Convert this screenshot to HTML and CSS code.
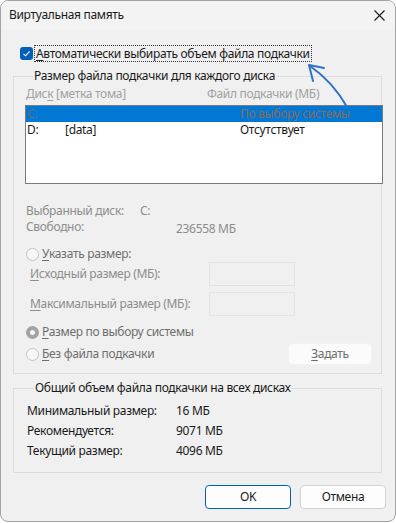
FILE: index.html
```html
<!DOCTYPE html>
<html lang="ru">
<head>
<meta charset="UTF-8">
<title>Виртуальная память</title>
<link rel="stylesheet" href="styles.css">
</head>
<body>

<div class="window">
    <div class="titlebar">
        <span class="title">Виртуальная память</span>
        <svg class="close" width="11" height="11" viewBox="0 0 11 11"><path d="M0.5 0.5 L10.5 10.5 M10.5 0.5 L0.5 10.5" stroke="#1a1a1a" stroke-width="1.1" fill="none"/></svg>
    </div>

    <div class="content">
        <div class="check-row">
            <span class="checkbox"><svg width="13" height="13" viewBox="0 0 13 13"><path d="M3.5 6.8 L5.6 8.8 L9.6 4.4" stroke="#fff" stroke-width="1.1" fill="none"/></svg></span>
            <span class="focus"><u>А</u>втоматически выбирать объем файла подкачки</span>
        </div>

        <fieldset class="group group-disk">
            <legend>Размер файла подкачки для каждого диска</legend>
            <div class="list-head">
                <span class="head-disk">Дис<u>к</u> [метка тома]</span>
                <span>Файл подкачки (МБ)</span>
            </div>
            <div class="list">
                <div class="list-row selected">
                    <span class="c-letter">C:</span><span class="c-label"></span><span class="c-size">По выбору системы</span>
                </div>
                <div class="list-row">
                    <span class="c-letter">D:</span><span class="c-label">[data]</span><span class="c-size">Отсутствует</span>
                </div>
            </div>

            <div class="info-row first">
                <span class="key-drive">Выбранный диск:</span><span>C:</span>
            </div>
            <div class="info-row">
                <span class="key-free">Свободно:</span><span class="free">236558 МБ</span>
            </div>

            <div class="radio-row custom">
                <span class="radio"></span><span><u>У</u>казать размер:</span>
            </div>
            <div class="field-row">
                <span class="field-label"><u>И</u>сходный размер (МБ):</span><span class="field"></span>
            </div>
            <div class="field-row second">
                <span class="field-label"><u>М</u>аксимальный размер (МБ):</span><span class="field"></span>
            </div>
            <div class="radio-row system">
                <span class="radio checked"></span><span><u>Р</u>азмер по выбору системы</span>
            </div>
            <div class="radio-row last">
                <span class="radio"></span><span><u>Б</u>ез файла подкачки</span>
                <span class="btn btn-set"><u>З</u>адать</span>
            </div>
        </fieldset>

        <fieldset class="group group-total">
            <legend>Общий объем файла подкачки на всех дисках</legend>
            <div class="total-row"><span class="total-key">Минимальный размер:</span><span>16 МБ</span></div>
            <div class="total-row"><span class="total-key">Рекомендуется:</span><span>9071 МБ</span></div>
            <div class="total-row"><span class="total-key">Текущий размер:</span><span>4096 МБ</span></div>
        </fieldset>

        <div class="buttons">
            <span class="btn btn-ok">OK</span>
            <span class="btn">Отмена</span>
        </div>
    </div>

    <svg class="arrow" width="396" height="523" viewBox="0 0 396 523">
        <path d="M347 107 Q333 82 310 66" stroke="#2f72c8" stroke-width="2" fill="none" stroke-linecap="round"/>
        <path d="M324 68 L309 65 L313 81" stroke="#2f72c8" stroke-width="2" fill="none" stroke-linecap="round" stroke-linejoin="round"/>
    </svg>
</div>

</body>
</html>
```

FILE: styles.css
```css
html {
    background-color: #fff;
}
body {
    margin: 0;
    font-family: "Noto Sans", "Liberation Sans", sans-serif;
    font-size: 12px;
    line-height: 16px;
    letter-spacing: -0.32px;
    color: #1a1a1a;
}
u {
    text-decoration-thickness: 1px;
    text-underline-offset: 2px;
}
.window {
    position: relative;
    width: 396px;
    height: 522px;
    box-sizing: border-box;
    border: 1px solid #a3a3a3;
    border-radius: 8px;
    background-color: #f0f0f0;
    overflow: hidden;
}
.titlebar {
    height: 29px;
    padding: 6px 0 0 8px;
    box-sizing: border-box;
    background-color: #f3f3f3;
    display: flex;
    justify-content: space-between;
}
.close {
    margin: 3px 10px 0 0;
}
.content {
    padding: 0 13px 0 12px;
}

/* checkbox */
.check-row {
    display: flex;
    align-items: center;
    margin-top: 15px;
    padding-left: 7px;
}
.checkbox {
    width: 13px;
    height: 13px;
    border-radius: 3px;
    background-color: #005fb8;
    display: flex;
}
.focus {
    margin-left: 1px;
    padding: 0 1px;
    line-height: 15px;
    border: 1px dotted #333;
}

/* groups */
.group {
    margin: 0;
    padding: 0;
    border: 1px solid #dcdcdc;
    min-width: 0;
}
.group legend {
    margin-left: 7px;
    padding: 0 1px;
    line-height: 16px;
}
.group-disk {
    margin-top: 6px;
    padding: 0 0 8px 12px;
}
.group-total {
    margin-top: 6px;
    padding: 5px 0 11px 13px;
}

.list-head {
    display: flex;
    margin-top: 2px;
    color: #a0a0a0;
}
.head-disk {
    width: 181px;
}
.list {
    height: 79px;
    margin: 3px -2px 0 -1px;
    border: 1px solid #7a7a80;
    background-color: #fff;
    box-sizing: border-box;
}
.list-row {
    display: flex;
    padding-left: 1px;
    height: 16px;
}
.list-row.selected {
    background-color: #0078d4;
    color: #6a6a70;
}
.list-row.selected .c-size {
    color: #8c6a58;
}
.c-letter {
    width: 38px;
}
.c-label {
    width: 175px;
}

.info-row {
    display: flex;
    color: #8c8c8c;
}
.info-row.first {
    margin-top: 19px;
}
.key-drive {
    width: 114px;
}
.key-free {
    width: 150px;
}
.free {
    margin-top: 2px;
}

.radio-row {
    display: flex;
    align-items: center;
    gap: 3px;
    color: #6e6e6e;
}
.radio-row.custom {
    margin-top: 9px;
}
.radio-row.system {
    margin-top: 8px;
}
.radio-row.last {
    margin-top: 3px;
    padding-right: 9px;
}
.radio {
    width: 13px;
    height: 13px;
    box-sizing: border-box;
    border: 1px solid #c2c2c2;
    border-radius: 50%;
    background-color: #f7f7f7;
}
.radio.checked {
    border: 4px solid #a3a3a3;
    background-color: #f7f7f7;
}

.field-row {
    display: flex;
    align-items: center;
    padding-left: 4px;
    color: #8c8c8c;
}
.field-row.second {
    margin-top: 6px;
}
.field-label {
    width: 179px;
}
.field {
    width: 86px;
    height: 24px;
    box-sizing: border-box;
    border: 1px solid #e3e3e3;
    background-color: #f0f0f0;
}

.btn {
    width: 86px;
    height: 24px;
    box-sizing: border-box;
    border: 1px solid #d3d3d3;
    border-radius: 4px;
    background-color: #fdfdfd;
    display: flex;
    align-items: center;
    justify-content: center;
}
.btn-set {
    width: 84px;
    height: 22px;
    margin-left: auto;
    border-color: #f2f2f2;
    background-color: #fbfbfb;
    color: #6e6e6e;
}
.btn-ok {
    border-color: #005fb8;
}
.buttons {
    display: flex;
    justify-content: flex-end;
    gap: 9px;
    margin: 12px -4px 0 0;
}

.total-row {
    display: flex;
    height: 20px;
    align-items: center;
}
.total-key {
    width: 149px;
}

.arrow {
    position: absolute;
    left: -1px;
    top: -1px;
    pointer-events: none;
}
```
